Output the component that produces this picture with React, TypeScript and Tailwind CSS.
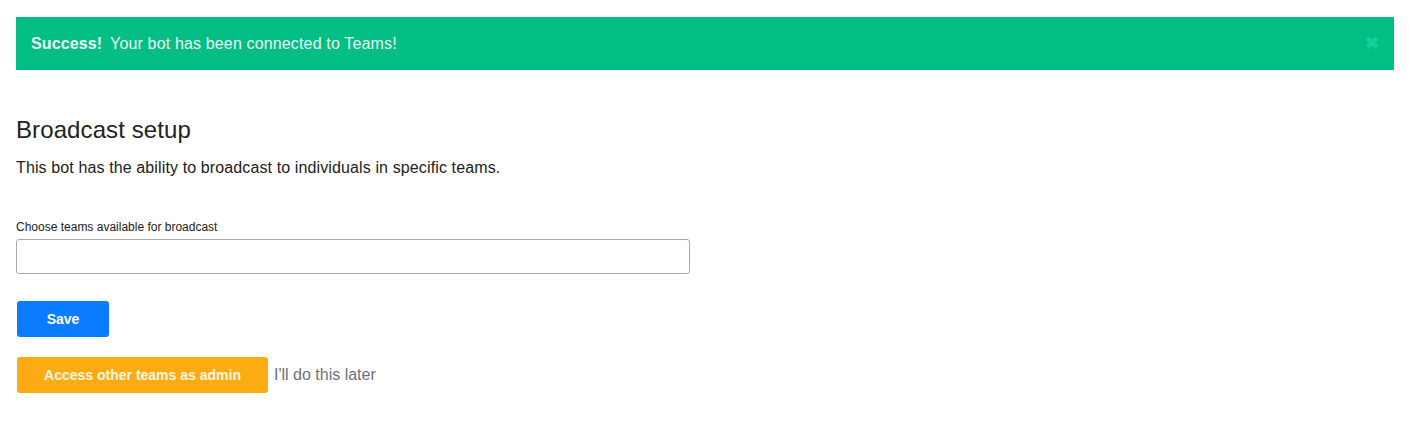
import React from "react";

export default function App() {
  return (
    <div className="w-[1409px] h-[437px] bg-white pl-4 pr-[15px] pt-[17px]" style={{ fontFamily: '"Liberation Sans", Arial, sans-serif' }}>
      <div className="relative h-[53px] bg-[#02be84] flex items-center pl-[15px] text-[16px] text-[#eefaf5]">
        <span className="font-bold tracking-[0.1px]">Success!</span>
        <span className="ml-[8px] tracking-[0.15px]">Your bot has been connected to Teams!</span>
        <span className="absolute right-[15px] top-[18px] text-[#15d09a] text-[17px] font-bold leading-none">✖</span>
      </div>
      <h2 className="mt-[45px] text-[24px] leading-[30px] text-[#222] tracking-[0.1px]">Broadcast setup</h2>
      <p className="mt-[12px] text-[16px] leading-[22px] text-[#222] tracking-[0.12px]">This bot has the ability to broadcast to individuals in specific teams.</p>
      <div className="mt-[41px] text-[12px] leading-[15px] text-[#222]">Choose teams available for broadcast</div>
      <div className="mt-[4px] w-[674px] h-[35px] border border-[#a9a9a9] rounded-[3px]"></div>
      <button className="mt-[27px] ml-[1px] w-[92px] h-[36px] bg-[#0a7cff] rounded-[3px] text-white font-bold text-[14px]">Save</button>
      <div className="mt-[20px] flex items-center">
        <button className="ml-[1px] w-[251px] h-[36px] bg-[#fdab12] rounded-[3px] text-[#fff6e4] font-bold text-[14px]">Access other teams as admin</button>
        <span className="ml-[6px] text-[16px] text-[#6b7280]">I'll do this later</span>
      </div>
    </div>
  );
}
